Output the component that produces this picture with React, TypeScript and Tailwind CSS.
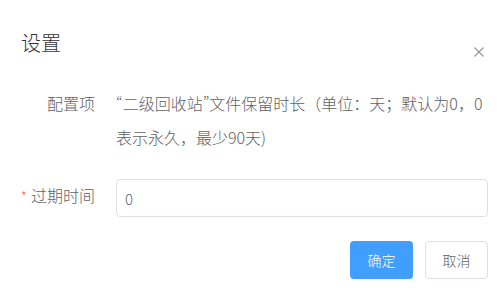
import React from "react";

const CloseIcon = () => (
  <svg viewBox="0 0 10 10" className="w-[10px] h-[10px]" fill="none">
    <path d="M0.5 0.5 L9.5 9.5 M9.5 0.5 L0.5 9.5" stroke="#909399" strokeWidth="1.1" />
  </svg>
);

// quotes drawn narrow, like the original font
const Q = ({ children }: { children: React.ReactNode }) => (
  <span className="[font-feature-settings:'pwid']">{children}</span>
);

const App = () => {
  return (
    <div className="relative w-[500px] h-[300px] bg-white overflow-hidden font-['Noto_Sans_CJK_SC',sans-serif] text-[#606266]">
      {/* header */}
      <div className="pt-[31px] pl-[21px] text-[20px] leading-[24px] text-[#303133] font-light">设置</div>
      <button className="absolute top-[47px] right-[16px] flex">
        <CloseIcon />
      </button>

      {/* form */}
      <div className="mt-[31px] pr-[12px] font-light">
        <div className="flex items-start">
          <label className="w-[95px] shrink-0 text-right text-[16px] leading-[34px]">配置项</label>
          <div className="ml-[21px] w-[372px] text-[16px] leading-[34px]">
            <Q>“</Q>二级回收站<Q>”</Q>文件保留时长（单位：天；默认为0，0表示永久，最少90天)
          </div>
        </div>

        <div className="flex items-start mt-[24px]">
          <label className="w-[95px] shrink-0 text-right text-[16px] leading-[34px]">
            <span className="text-[#f56c6c] text-[14px] mr-[4px]">*</span>
            过期时间
          </label>
          <input
            defaultValue="0"
            className="ml-[21px] mt-[1px] w-[372px] h-[38px] border border-[#dcdfe6] rounded-[4px] pl-[8px] text-[15px] text-[#606266] outline-none"
          />
        </div>

        <div className="flex justify-end gap-[12px] mt-[24px]">
          <button className="w-[63px] h-[38px] rounded-[4px] bg-[#409eff] text-white text-[14px]">确定</button>
          <button className="w-[63px] h-[38px] rounded-[4px] border border-[#dcdfe6] bg-white text-[#606266] text-[14px]">取消</button>
        </div>
      </div>
    </div>
  );
};

export default App;
